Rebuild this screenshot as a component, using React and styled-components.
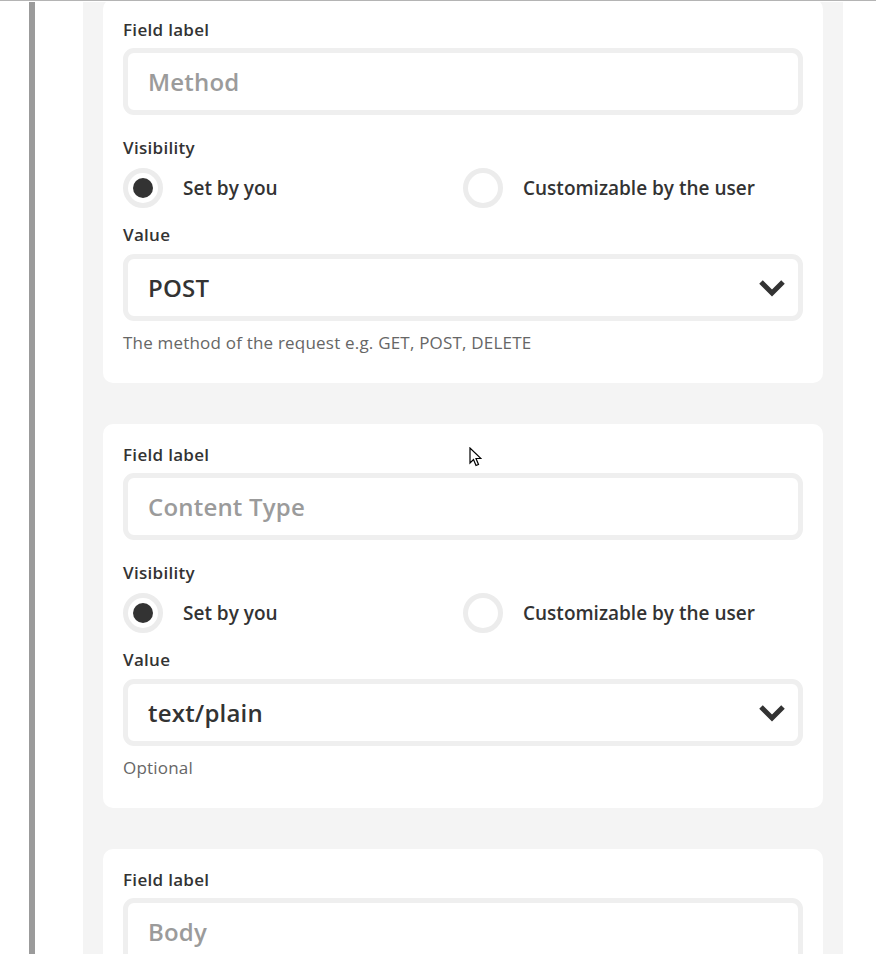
import styled, { createGlobalStyle } from "styled-components";

const GlobalStyle = createGlobalStyle`
  html, body {
    margin: 0;
    padding: 0;
    background: #fff;
    font-family: "Open Sans", Lato, sans-serif;
    color: #333;
    overflow: hidden;
  }
`;

const fields = [
  {
    placeholder: "Method",
    value: "POST",
    help: "The method of the request e.g. GET, POST, DELETE",
  },
  {
    placeholder: "Content Type",
    value: "text/plain",
    help: "Optional",
  },
  {
    placeholder: "Body",
  },
];

const Page = styled.div`
  height: 954px;
  border-top: 1px solid #b4b4b4;
  box-sizing: border-box;
  position: relative;
  overflow: hidden;
`;

const Layout = styled.div`
  display: flex;
  height: 100%;
  padding-top: 1px;
  box-sizing: border-box;
`;

const Rail = styled.div`
  width: 6px;
  margin-left: 29px;
  margin-right: 48px;
  background: #9b9b9b;
`;

const Panel = styled.div`
  width: 760px;
  background: #f4f4f4;
  padding: 0 20px;
  box-sizing: border-box;
  display: flex;
  flex-direction: column;
  gap: 41px;
  overflow: hidden;
`;

const Card = styled.div`
  background: #fff;
  border-radius: 10px;
  padding: 20px 20px 30px;
  display: flex;
  flex-direction: column;
  flex-shrink: 0;
  &:first-child {
    margin-top: -3px;
  }
`;

const Label = styled.div`
  font-size: 17px;
  font-weight: 600;
  letter-spacing: 0.3px;
  line-height: 22px;
  color: #333;
  margin-top: ${(p) => p.$top || 0}px;
`;

const Box = styled.div`
  height: 67px;
  box-sizing: border-box;
  border: 5px solid #efefef;
  border-radius: 11px;
  padding: 0 12px 0 20px;
  display: flex;
  align-items: center;
  justify-content: space-between;
  font-size: 24px;
  font-weight: 600;
  letter-spacing: 0.2px;
  color: ${(p) => (p.$placeholder ? "#9b9b9b" : "#333")};
  margin-top: ${(p) => p.$top || 0}px;
`;

const RadioRow = styled.div`
  display: grid;
  grid-template-columns: 1fr 1fr;
  margin-top: 9px;
`;

const Option = styled.div`
  display: flex;
  align-items: center;
  gap: 20px;
  font-size: 19px;
  font-weight: 600;
  color: #333;
`;

const Ring = styled.span`
  width: 40px;
  height: 40px;
  box-sizing: border-box;
  border: 5px solid #ececec;
  border-radius: 50%;
  display: flex;
  align-items: center;
  justify-content: center;
  &::after {
    content: "";
    width: 20px;
    height: 20px;
    border-radius: 50%;
    background: ${(p) => (p.$checked ? "#333" : "transparent")};
  }
`;

const Help = styled.div`
  font-size: 17px;
  letter-spacing: 0.2px;
  line-height: 20px;
  color: #666;
  margin-top: 12px;
`;

const Cursor = styled.svg`
  position: absolute;
  left: 469px;
  top: 446px;
`;

const Chevron = () => (
  <svg width="28" height="18" viewBox="0 0 28 18">
    <polyline
      points="3,3 14,14 25,3"
      fill="none"
      stroke="#333"
      strokeWidth="5"
      strokeLinejoin="miter"
    />
  </svg>
);

const FieldCard = ({ placeholder, value, help }) => (
  <Card>
    <Label>Field label</Label>
    <Box $placeholder $top={7}>{placeholder}</Box>
    {value && (
      <>
        <Label $top={22}>Visibility</Label>
        <RadioRow>
          <Option>
            <Ring $checked />
            Set by you
          </Option>
          <Option>
            <Ring />
            Customizable by the user
          </Option>
        </RadioRow>
        <Label $top={16}>Value</Label>
        <Box $top={8}>
          {value}
          <Chevron />
        </Box>
        <Help>{help}</Help>
      </>
    )}
  </Card>
);

export default function App() {
  return (
    <>
      <GlobalStyle />
      <Page>
        <Layout>
          <Rail />
          <Panel>
            {fields.map((f) => (
              <FieldCard key={f.placeholder} {...f} />
            ))}
          </Panel>
        </Layout>
        <Cursor width="13" height="20" viewBox="0 0 13 20">
          <path
            d="M1 1 L1 16 L4.5 12.5 L7 18.5 L9.5 17.5 L7 11.5 L12 11.5 Z"
            fill="#fff"
            stroke="#000"
            strokeWidth="1.2"
            strokeLinejoin="miter"
          />
        </Cursor>
      </Page>
    </>
  );
}
